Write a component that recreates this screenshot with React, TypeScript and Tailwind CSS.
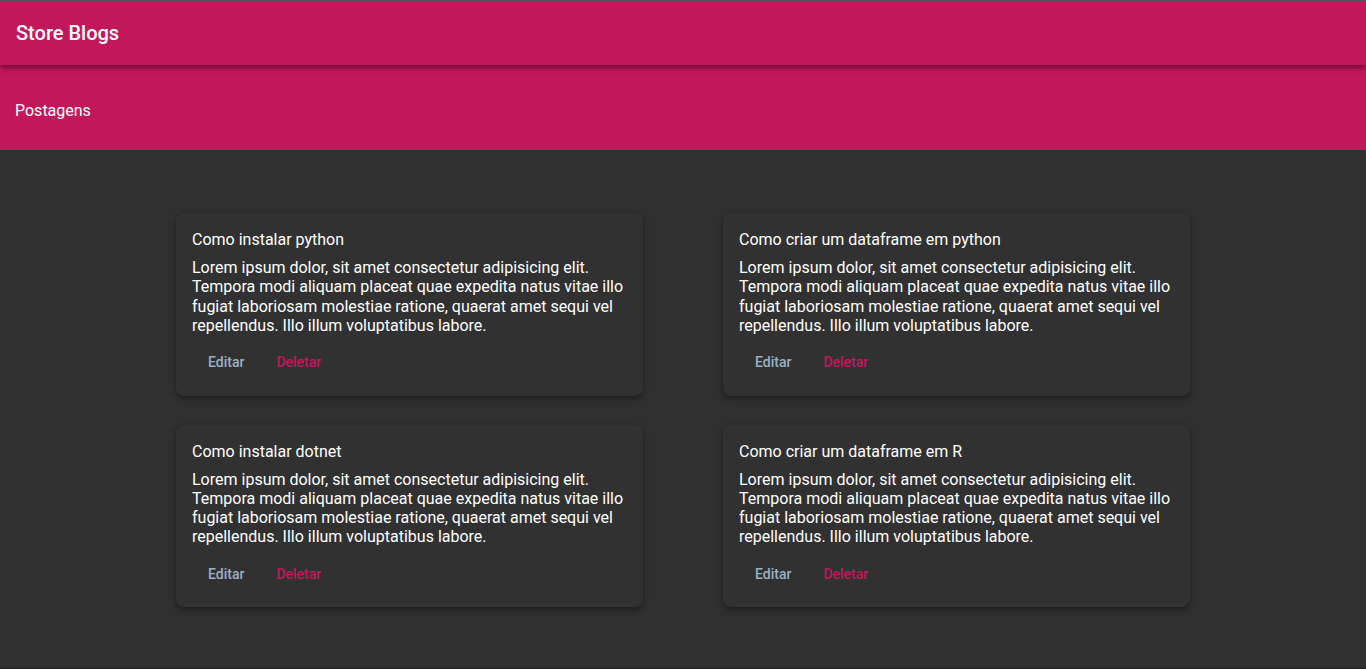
import React from "react";

const posts = [
  "Como instalar python",
  "Como criar um dataframe em python",
  "Como instalar dotnet",
  "Como criar um dataframe em R",
];

const body =
  "Lorem ipsum dolor, sit amet consectetur adipisicing elit. Tempora modi aliquam placeat quae expedita natus vitae illo fugiat laboriosam molestiae ratione, quaerat amet sequi vel repellendus. Illo illum voluptatibus labore.";

export default function App() {
  return (
    <div
      className="min-h-[669px] bg-[#303030] border-t border-t-[#5b5b5b] border-b border-b-[#1c1c1c] flex flex-col"
      style={{ fontFamily: "Roboto, 'Liberation Sans', sans-serif" }}
    >
      <header className="relative z-10 h-16 bg-[#c2185b] flex items-center px-4 shadow-[0_2px_4px_-1px_rgba(0,0,0,0.25),0_4px_5px_0_rgba(0,0,0,0.18),0_1px_10px_0_rgba(0,0,0,0.15)]">
        <h1 className="text-white text-[20px] font-medium">Store Blogs</h1>
      </header>
      <div className="h-[85px] bg-[#c2185b] flex items-center px-[15px] pt-[6px]">
        <span className="text-white text-base">Postagens</span>
      </div>
      <main className="flex-1 flex justify-center pt-[63px] pb-[61px]">
        <div className="grid grid-cols-[467px_467px] gap-x-20 gap-y-[29px]">
          {posts.map((t) => (
            <div
              key={t}
              className="bg-[#313131] rounded-lg px-4 pt-[17px] shadow-[0_2px_4px_-1px_rgba(0,0,0,0.2),0_4px_5px_0_rgba(0,0,0,0.14),0_1px_10px_0_rgba(0,0,0,0.12)]"
            >
              <div className="text-white text-base leading-5">{t}</div>
              <p className="text-white text-base leading-[19.3px] mt-[8px]">{body}</p>
              <div className="flex pt-[9px] pb-[15px]">
                <button className="h-9 px-4 text-sm font-medium text-[#9cb0c4]">Editar</button>
                <button className="h-9 px-4 text-sm font-medium text-[#c2185b]">Deletar</button>
              </div>
            </div>
          ))}
        </div>
      </main>
    </div>
  );
}
